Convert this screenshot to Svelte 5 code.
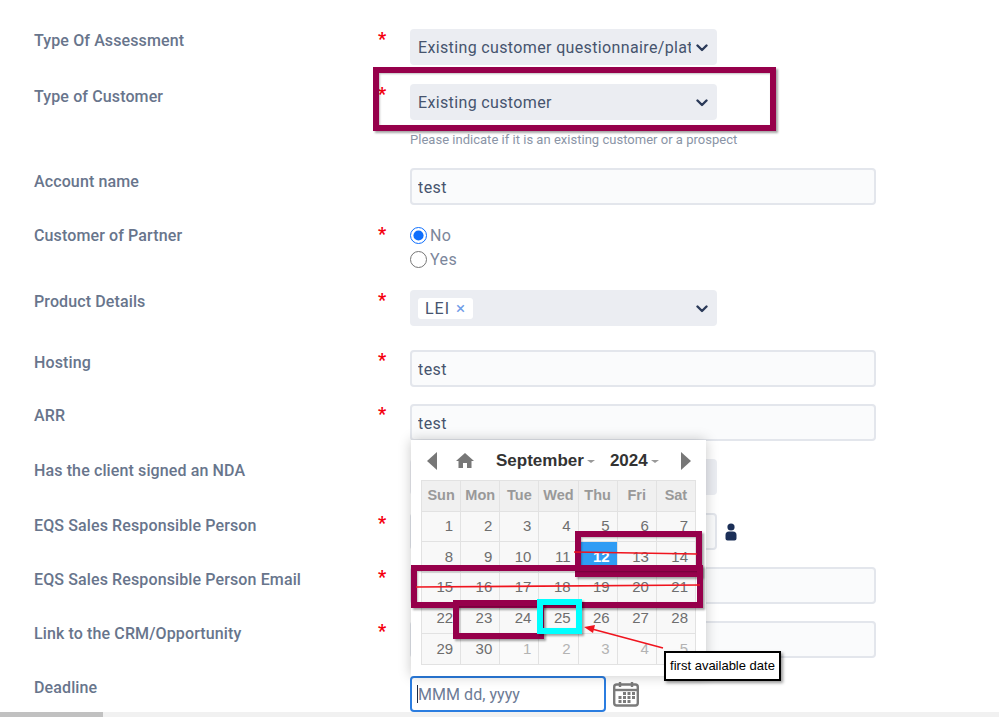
<script>
  const weekdays = ['Sun', 'Mon', 'Tue', 'Wed', 'Thu', 'Fri', 'Sat'];
  const weeks = [
    [1, 2, 3, 4, 5, 6, 7],
    [8, 9, 10, 11, 12, 13, 14],
    [15, 16, 17, 18, 19, 20, 21],
    [22, 23, 24, 25, 26, 27, 28],
    [29, 30, 1, 2, 3, 4, 5]
  ];
</script>

{#snippet chevron()}
  <svg class="chev" width="12" height="8" viewBox="0 0 12 8"><path d="M1.5 1.5 6 6l4.500-4.500" fill="none" stroke="#2b3a59" stroke-width="2.400" stroke-linecap="round" stroke-linejoin="round"/></svg>
{/snippet}

<div class="page">
  <form class="form">
    <div class="row h55">
      <span class="label">Type Of Assessment</span><span class="star">*</span>
      <div class="select short"><span class="clip">Existing customer questionnaire/platform</span>{@render chevron()}</div>
    </div>
    <div class="row h84">
      <span class="label d2">Type of Customer</span><span class="star">*</span>
      <div class="stack">
        <div class="select short"><span class="clip">Existing customer</span>{@render chevron()}</div>
        <small class="help">Please indicate if it is an existing customer or a prospect</small>
      </div>
    </div>
    <div class="row h56">
      <span class="label d3">Account name</span><span class="star"></span>
      <input class="input" value="test" readonly />
    </div>
    <div class="row h66">
      <span class="label">Customer of Partner</span><span class="star">*</span>
      <div class="radios">
        <label class="radio"><input type="radio" name="p" checked />No</label>
        <label class="radio"><input type="radio" name="p" />Yes</label>
      </div>
    </div>
    <div class="row h60">
      <span class="label">Product Details</span><span class="star">*</span>
      <div class="select short"><span class="tag">LEI <i>×</i></span>{@render chevron()}</div>
    </div>
    <div class="row h54">
      <span class="label d2">Hosting</span><span class="star">*</span>
      <input class="input" value="test" readonly />
    </div>
    <div class="row h55">
      <span class="label">ARR</span><span class="star">*</span>
      <input class="input" value="test" readonly />
    </div>
    <div class="row h54">
      <span class="label">Has the client signed an NDA</span><span class="star"></span>
      <div class="select short"></div>
    </div>
    <div class="row h54">
      <span class="label d2">EQS Sales Responsible Person</span><span class="star">*</span>
      <div class="with-icon">
        <input class="input short" readonly />
        <svg width="12" height="18" viewBox="0 0 12 18"><circle cx="6" cy="4" r="3.600" fill="#1b2f57"/><path d="M0.500 12a3.500 3.500 0 0 1 3.500-3.500h4a3.500 3.500 0 0 1 3.500 3.500v3.500a2 2 0 0 1-2 2h-7a2 2 0 0 1-2-2z" fill="#1b2f57"/></svg>
      </div>
    </div>
    <div class="row h54">
      <span class="label d2">EQS Sales Responsible Person Email</span><span class="star">*</span>
      <input class="input" readonly />
    </div>
    <div class="row h55">
      <span class="label d2">Link to the CRM/Opportunity</span><span class="star">*</span>
      <input class="input" readonly />
    </div>
    <div class="row h36">
      <span class="label">Deadline</span><span class="star"></span>
      <div class="with-icon gap7">
        <div class="date-field"><i class="caret"></i><input class="date" placeholder="MMM dd, yyyy" readonly /></div>
        <svg width="26" height="26" viewBox="0 0 26 26" fill="none">
          <rect x="1.200" y="3.500" width="23.600" height="21" rx="2.500" stroke="#7b7b7b" stroke-width="2.400"/>
          <path d="M1.500 9h23" stroke="#7b7b7b" stroke-width="2.400"/>
          <path d="M7 1v5M19 1v5" stroke="#7b7b7b" stroke-width="2.400"/>
          <g fill="#7b7b7b"><rect x="10" y="11" width="3" height="3"/><rect x="14.500" y="11" width="3" height="3"/><rect x="19" y="11" width="3" height="3"/><rect x="5.500" y="15" width="3" height="3"/><rect x="10" y="15" width="3" height="3"/><rect x="14.500" y="15" width="3" height="3"/><rect x="19" y="15" width="3" height="3"/><rect x="5.500" y="19" width="3" height="3"/><rect x="10" y="19" width="3" height="3"/><rect x="14.500" y="19" width="3" height="3"/></g>
        </svg>
      </div>
    </div>
  </form>

  <div class="calendar">
    <div class="cal-head">
      <svg class="tri" width="10" height="18" viewBox="0 0 10 18"><path d="M10 0v18L0 9z" fill="#777"/></svg>
      <svg class="home" width="18" height="15" viewBox="0 0 18 15"><path d="M9 0 0 8h2.500v7h4.500v-5h4v5h4.500V8H18z" fill="#777"/></svg>
      <span class="month">September<b class="dd"></b></span>
      <span class="year">2024<b class="dd"></b></span>
      <svg class="tri right" width="10" height="18" viewBox="0 0 10 18"><path d="M0 0v18l10-9z" fill="#777"/></svg>
    </div>
    <table>
      <thead><tr>{#each weekdays as d}<th>{d}</th>{/each}</tr></thead>
      <tbody>
        {#each weeks as w, wi}
          <tr>
            {#each w as n}
              <td class:sel={n === 12} class:muted={wi === 4 && n < 6}>{n}</td>
            {/each}
          </tr>
        {/each}
      </tbody>
    </table>
  </div>

  <div class="mark m1"></div>
  <div class="mark m2"></div>
  <div class="mark m3"></div>
  <div class="mark m4"></div>
  <div class="mark cyan"></div>

  <svg class="lines" width="999" height="717" viewBox="0 0 999 717">
    <path d="M574 552 697 554M416 587 700 585M663 648 592 629" stroke="#f0141e" stroke-width="1.600" fill="none"/>
    <path d="M584 627 595 625 593 633z" fill="#f0141e"/>
  </svg>
  <div class="callout">first available date</div>

  <div class="scrollbar"><div class="thumb"></div></div>
</div>

<style>
  :global(body) {
    margin: 0;
    background: #fff;
    overflow: hidden;
  }
  .page {
    position: relative;
    width: 999px;
    height: 717px;
    overflow: hidden;
    font-family: Roboto, "Noto Sans", sans-serif;
    font-size: 16px;
    color: #46546e;
  }
  .form {
    display: flex;
    flex-direction: column;
    padding: 29px 0 0 34px;
  }
  .row {
    display: grid;
    grid-template-columns: 344px 32px 1fr;
    align-items: start;
  }
  .h36 { height: 36px; }
  .h54 { height: 54px; }
  .h55 { height: 55px; }
  .h56 { height: 56px; }
  .h60 { height: 60px; }
  .h66 { height: 66px; }
  .h84 { height: 84px; }
  .label {
    color: #68758c;
    font-weight: 500;
    letter-spacing: 0.12px;
    line-height: 22px;
    margin-top: 1px;
  }
  .label.d2 { margin-top: 2px; }
  .label.d3 { margin-top: 3px; }
  .star {
    color: #f5000f;
    font-size: 18px;
    font-weight: 700;
    line-height: 18px;
    margin-top: 1px;
  }
  .select {
    width: 589px;
    height: 36px;
    box-sizing: border-box;
    background: #ebedf2;
    border-radius: 4px;
    display: flex;
    align-items: center;
    padding: 1px 9px 0 8px;
    letter-spacing: 0.36px;
  }
  .select.short { width: 307px; }
  .clip {
    flex: 1;
    white-space: nowrap;
    overflow: hidden;
    margin-right: 5px;
  }
  .chev { margin-left: auto; flex: none; }
  .stack { display: flex; flex-direction: column; }
  .help {
    margin-top: 11px;
    font-size: 13px;
    letter-spacing: 0.02px;
    line-height: 18px;
    color: #8a94a6;
  }
  .input {
    display: block;
    width: 466px;
    height: 37px;
    box-sizing: border-box;
    background: #fafbfc;
    border: 2px solid #e3e6ec;
    border-radius: 4px;
    padding: 2px 6px 0;
    font: inherit;
    letter-spacing: 0.45px;
    color: #46546e;
    outline: none;
  }
  .input.short { width: 307px; }
  .with-icon {
    display: flex;
    align-items: center;
    gap: 8px;
  }
  .gap7 { gap: 7px; }
  .radios { display: flex; flex-direction: column; margin-top: -1px; }
  .radio {
    display: flex;
    align-items: center;
    height: 24.500px;
    color: #7b869b;
    letter-spacing: 0.4px;
    gap: 3px;
  }
  .radio input {
    width: 17px;
    height: 17px;
    margin: 0;
    accent-color: #0d6efd;
  }
  .tag {
    background: #fff;
    border-radius: 3px;
    padding: 0 7px;
    line-height: 21px;
    display: inline-flex;
    align-items: center;
    gap: 6px;
    letter-spacing: 1px;
  }
  .tag i {
    font-style: normal;
    color: #6f9be8;
    font-size: 17px;
  }
  .date-field { position: relative; }
  .date {
    display: block;
    width: 196px;
    height: 36px;
    box-sizing: border-box;
    border: 2px solid #2b7de0;
    border-radius: 4px;
    padding: 0 6px;
    background: #fff;
    font: inherit;
    letter-spacing: 0.05px;
    outline: none;
  }
  .date::placeholder { color: #6d7b95; opacity: 1; }
  .caret {
    position: absolute;
    left: 7px;
    top: 9px;
    width: 1px;
    height: 18px;
    background: #1d2a44;
  }
  .calendar {
    position: absolute;
    left: 411px;
    top: 440px;
    width: 295px;
    height: 236px;
    box-sizing: border-box;
    background: #fff;
    box-shadow: 0 0 12px rgba(0, 0, 0, 0.22);
    padding: 0 10px 0 10px;
    font-family: "Liberation Sans", Arial, sans-serif;
    color: #666;
  }
  .cal-head {
    display: flex;
    align-items: center;
    height: 40px;
    padding-top: 1px;
    box-sizing: border-box;
    color: #333;
    font-weight: 700;
    font-size: 17px;
  }
  .tri { margin-left: 6px; }
  .home { margin-left: 19px; }
  .month { margin-left: 22px; }
  .year { margin-left: 15px; }
  .tri.right { margin-left: 22px; }
  .dd {
    display: inline-block;
    margin-left: 3px;
    vertical-align: middle;
    border-left: 4px solid transparent;
    border-right: 4px solid transparent;
    border-top: 3px solid #999;
  }
  table {
    border-collapse: collapse;
    table-layout: fixed;
    width: 275px;
  }
  th, td {
    border: 1px solid #e2e2e2;
    height: 30.700px;
    padding: 0 7px 2px 0;
    box-sizing: border-box;
  }
  th {
    padding: 0 0 2px;
    background: #f0f0f0;
    color: #999;
    font-size: 14.500px;
    font-weight: 700;
    text-align: center;
  }
  td {
    background: #f8f8f8;
    text-align: right;
    font-size: 15px;
    color: #6e6e6e;
  }
  td.muted { color: #b3b3b3; background: #fafafa; }
  td.sel { background: #2f9cf4; color: #fff; font-weight: 700; }
  .mark {
    position: absolute;
    box-sizing: border-box;
    border: 6px solid #96004b;
    box-shadow: 2px 2px 2px rgba(0, 0, 0, 0.35), inset 1px 1px 2px rgba(0, 0, 0, 0.25);
  }
  .m1 { left: 373px; top: 67px; width: 403px; height: 64px; }
  .m2 { left: 575px; top: 531px; width: 127px; height: 46px; }
  .m3 { left: 411px; top: 565px; width: 292px; height: 43px; }
  .m4 { left: 453px; top: 600px; width: 91px; height: 39px; }
  .cyan { left: 537px; top: 599px; width: 45px; height: 35px; border-color: #0ff; }
  .lines {
    position: absolute;
    inset: 0;
    pointer-events: none;
  }
  .callout {
    position: absolute;
    left: 664px;
    top: 651px;
    width: 117px;
    height: 30px;
    box-sizing: border-box;
    border: 2px solid #000;
    background: #fff;
    box-shadow: 2px 2px 3px rgba(0, 0, 0, 0.4);
    font: 13px/26px "Liberation Sans", Arial, sans-serif;
    color: #000;
    text-align: center;
    white-space: nowrap;
  }
  .scrollbar {
    position: absolute;
    left: 0;
    right: 0;
    bottom: 0;
    height: 5px;
    background: #f1f1f1;
  }
  .thumb { width: 103px; height: 100%; background: #c1c1c1; }
</style>
